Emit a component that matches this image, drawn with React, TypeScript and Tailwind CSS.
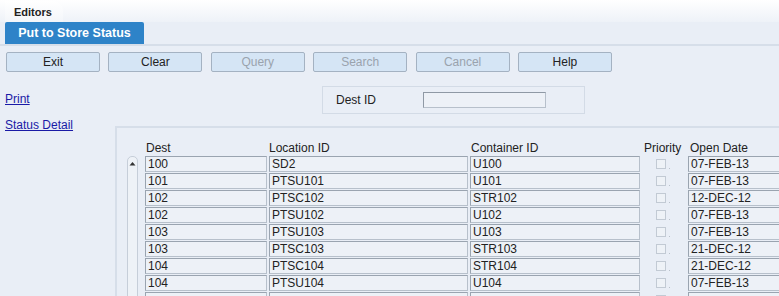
import React from 'react';

const buttons = [
  { label: 'Exit', enabled: true },
  { label: 'Clear', enabled: true },
  { label: 'Query', enabled: false },
  { label: 'Search', enabled: false },
  { label: 'Cancel', enabled: false },
  { label: 'Help', enabled: true },
];

const rows = [
  ['100', 'SD2', 'U100', '07-FEB-13'],
  ['101', 'PTSU101', 'U101', '07-FEB-13'],
  ['102', 'PTSC102', 'STR102', '12-DEC-12'],
  ['102', 'PTSU102', 'U102', '07-FEB-13'],
  ['103', 'PTSU103', 'U103', '07-FEB-13'],
  ['103', 'PTSC103', 'STR103', '21-DEC-12'],
  ['104', 'PTSC104', 'STR104', '21-DEC-12'],
  ['104', 'PTSU104', 'U104', '07-FEB-13'],
  ['', '', '', ''],
];

const cell =
  'h-[16px] bg-[#edf1f7] border border-[#b7c0cb] border-t-[#9aa4b0] border-l-[#9aa4b0] pl-[2px] leading-[14px] text-[12px] text-[#222] overflow-hidden whitespace-nowrap';

export default function App() {
  return (
    <div
      className="w-[779px] h-[296px] overflow-hidden bg-[#e9eef6] text-[12px] text-[#222]"
      style={{ fontFamily: '"Liberation Sans", Arial, sans-serif' }}
    >
      {/* Top tab strip */}
      <div className="h-[22px] bg-gradient-to-b from-white to-[#eef2f8] flex items-end pl-[5px]">
        <div className="h-[21px] w-[58px] bg-gradient-to-b from-white to-[#f3f6fa] rounded-tr-[10px] pl-[9px] pt-[3px] text-[11px] font-bold text-[#222]">
          Editors
        </div>
      </div>

      {/* Form tab */}
      <div className="flex pl-[5px] border-b-2 border-[#d6dee9]">
        <div className="w-[139px] h-[22px] bg-[#2e83c8] rounded-tl-[2px] rounded-tr-[2px] text-white font-bold text-[12.5px] leading-[22px] text-center">
          Put to Store Status
        </div>
      </div>

      {/* Button bar */}
      <div className="flex gap-[8.4px] pl-[6px] pt-[6px]">
        {buttons.map(b => (
          <div
            key={b.label}
            className={`w-[94px] h-[20px] rounded-[2px] border border-[#a4b2c2] bg-[#d5e5f5] text-center leading-[18px] text-[12px] ${
              b.enabled ? 'text-[#222]' : 'text-[#9aa3ad]'
            }`}
          >
            {b.label}
          </div>
        ))}
      </div>

      {/* Main area */}
      <div className="flex mt-[14px]">
        <div className="w-[115px] shrink-0 pl-[5px] flex flex-col">
          <a className="text-[#1a1aa6] underline text-[12px] leading-[14px] mt-[6px]">Print</a>
          <a className="text-[#1a1aa6] underline text-[12px] leading-[14px] mt-[12px]">Status Detail</a>
        </div>

        <div className="flex-1 flex flex-col">
          {/* Search panel */}
          <div className="ml-[207px] w-[263px] h-[28px] border border-[#d3dbe6] flex items-center">
            <span className="ml-[13px] w-[87px] text-[12px]">Dest ID</span>
            <div className="w-[123px] h-[16px] border border-[#b7c0cb] border-t-[#8f99a5] border-l-[#8f99a5] bg-[#edf1f7]" />
          </div>

          {/* Table panel */}
          <div className="mt-[12px] border-l-2 border-t-2 border-[#d6dee9] flex pl-[10px] pt-[11px]">
            <div className="w-[11px] mt-[17px] mr-[7px] h-[200px] border border-[#c6ced9] rounded-t-[5px] bg-[#eef2f7] flex justify-center">
              <svg width="7" height="6" viewBox="0 0 7 6" className="mt-[4px]">
                <path d="M3.5 1 L6.5 4.5 L0.5 4.5 Z" fill="#333" />
              </svg>
            </div>
            <div className="flex flex-col">
              <div className="flex h-[17px] items-center text-[12px] text-[#222]">
                <span className="w-[124px] pl-[1px]">Dest</span>
                <span className="w-[202px]">Location ID</span>
                <span className="w-[173px]">Container ID</span>
                <span className="w-[46px]">Priority</span>
                <span>Open Date</span>
              </div>
              {rows.map((r, i) => (
                <div key={i} className="flex items-center gap-[2px] mb-[1px]">
                  <div className={`${cell} w-[122px]`}>{r[0]}</div>
                  <div className={`${cell} w-[199px]`}>{r[1]}</div>
                  <div className={`${cell} w-[170px]`}>{r[2]}</div>
                  <div className="w-[44px] h-[16px] flex items-center pl-[14px]">
                    <div className="w-[10px] h-[10px] border border-[#c2cad4] bg-[#eef2f7]" />
                    <span className="w-[1px] h-[1px] bg-[#b9c1cb] self-end mb-[3px] ml-[3px]" />
                  </div>
                  <div className={`${cell} w-[100px]`}>{r[3]}</div>
                </div>
              ))}
            </div>
          </div>
        </div>
      </div>
    </div>
  );
}
